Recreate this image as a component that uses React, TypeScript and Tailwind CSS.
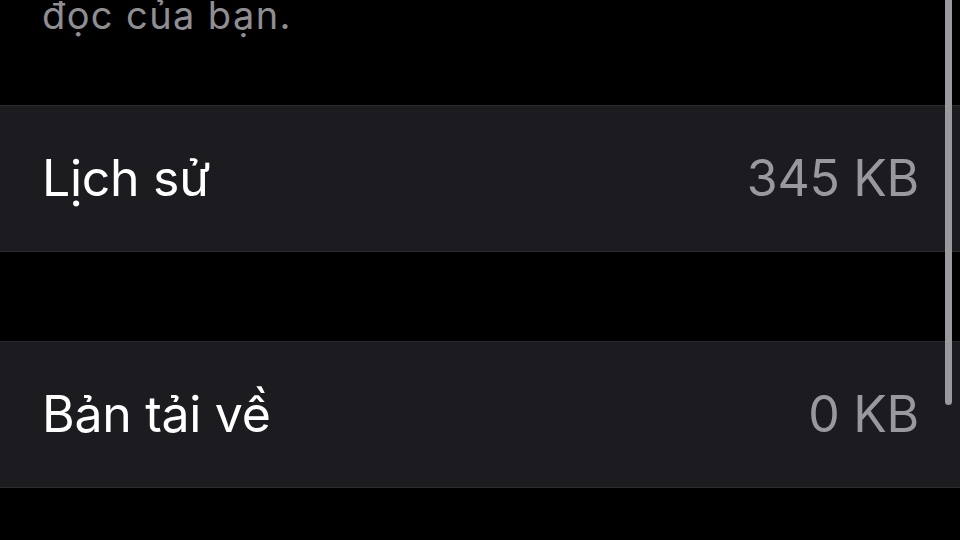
export default function App() {
  const font = { fontFamily: 'Inter, "Noto Sans", sans-serif' };
  return (
    <div className="relative w-[960px] h-[540px] bg-black overflow-hidden" style={font}>
      <div className="h-[105px]">
        <p className="pl-[42px] text-[38px] leading-[30px] tracking-[1.4px] text-[#8e8e93]">đọc của bạn.</p>
      </div>
      <div className="h-[147px] bg-[#1c1b1f] border-y border-[#2c2c2e] flex items-center justify-between pl-[42px] pr-[41px]">
        <span className="text-[50px] text-white tracking-[-0.3px]">Lịch sử</span>
        <span className="text-[50px] text-[#98989e] tracking-[-0.3px]">345 KB</span>
      </div>
      <div className="h-[89px]" />
      <div className="h-[147px] bg-[#1c1b1f] border-y border-[#2c2c2e] flex items-center justify-between pl-[42px] pr-[41px]">
        <span className="text-[50px] text-white tracking-[-0.3px]">Bản tải về</span>
        <span className="text-[50px] text-[#98989e] tracking-[-0.3px]">0 KB</span>
      </div>
      <div className="absolute right-[8px] top-[-10px] w-[7px] h-[415px] rounded-full bg-[#9a9a9e]" />
    </div>
  );
}
